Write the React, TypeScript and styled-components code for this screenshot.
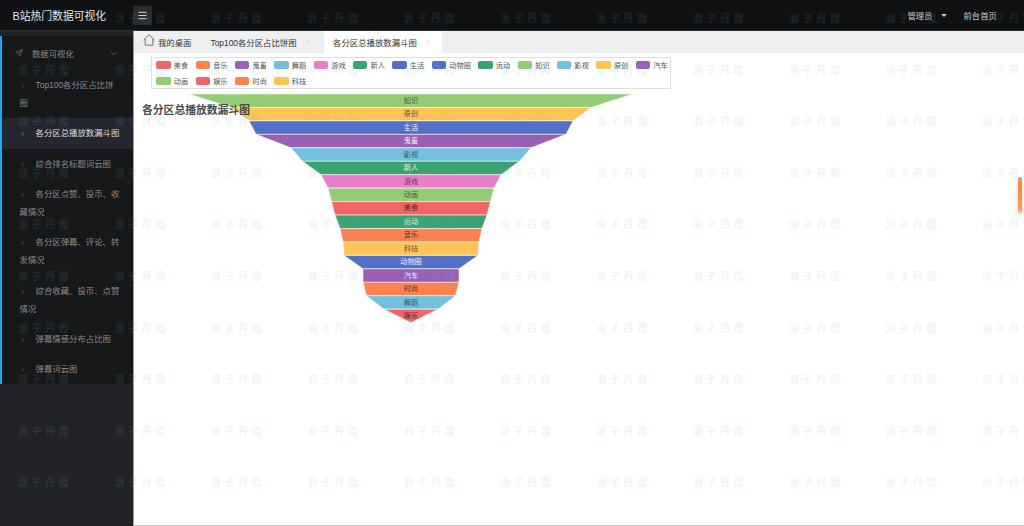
import React from 'react';
import styled, { createGlobalStyle } from 'styled-components';
import { X, ChevronRight, ChevronDown, Send, Menu } from 'lucide-react';

const GlobalStyle = createGlobalStyle`
  html, body {
    margin: 0;
    height: 100%;
    background: #fff;
    overflow: hidden;
  }
  * {
    box-sizing: border-box;
  }
  #root {
    height: 100%;
  }
`;

const FONT = `"Liberation Sans", "Noto Sans CJK SC", sans-serif`;

const Page = styled.div`
  position: relative;
  display: flex;
  flex-direction: column;
  width: 1024px;
  height: 526px;
  overflow: hidden;
  font-family: ${FONT};
  font-size: 8.4px;
`;

const Header = styled.header`
  display: flex;
  align-items: center;
  flex: 0 0 31px;
  background: #101112;
  border-bottom: 1px solid #2c2d2e;
`;

const Logo = styled.div`
  width: 133px;
  padding-left: 12.5px;
  color: #e6e6e6;
  font-size: 10.8px;
`;

const MenuButton = styled.div`
  display: flex;
  align-items: center;
  justify-content: center;
  width: 19px;
  height: 19px;
  border-radius: 2px;
  background: #2b2c2d;
  color: #e0e0e0;
`;

const HeaderRight = styled.div`
  display: flex;
  align-items: center;
  margin-left: auto;
  padding-right: 27px;
  color: #c8c8c8;
`;

const Caret = styled.span`
  width: 0;
  height: 0;
  margin: 1px 17px 0 8px;
  border-left: 3px solid transparent;
  border-right: 3px solid transparent;
  border-top: 3px solid #c8c8c8;
`;

const Body = styled.div`
  display: flex;
  flex: 1;
  min-height: 0;
`;

const Sidebar = styled.aside`
  flex: 0 0 133px;
  padding-top: 5px;
  background: #212326;
`;

const Nav = styled.nav`
  height: 348px;
  border-left: 2.4px solid #1eaaf1;
  background: #171819;
  color: #8a8a8a;
`;

const NavGroup = styled.div`
  display: flex;
  align-items: center;
  height: 34px;
  padding: 0 15px 0 13px;
  svg:first-child {
    margin-right: 9px;
  }
  svg:last-child {
    margin-left: auto;
  }
`;

const NavItem = styled.div<{ $active?: boolean }>`
  padding: 6.15px 12px 6.15px 17.6px;
  line-height: 18px;
  color: ${(p) => (p.$active ? '#dcdcdc' : '#8a8a8a')};
  background: ${(p) => (p.$active ? '#24272f' : 'transparent')};
  svg {
    margin-right: 10px;
    vertical-align: -1px;
  }
`;

const Main = styled.main`
  display: flex;
  flex-direction: column;
  flex: 1;
  min-width: 0;
  border-left: 1px solid #9a9a9a;
  border-bottom: 1px solid #c4c4c4;
`;

const TabBar = styled.div`
  display: flex;
  flex: 0 0 21.5px;
  background: #eeeff1;
`;

const Tab = styled.div<{ $active?: boolean }>`
  display: flex;
  align-items: center;
  padding: 0 11px 0 9px;
  color: #333;
  background: ${(p) => (p.$active ? '#fff' : 'transparent')};
  &:first-child {
    padding-right: 10px;
  }
  &:nth-child(2) {
    padding-right: 13.5px;
  }
`;

const HomeIcon = styled.svg`
  margin: -3px 3px 0 0;
  color: #555;
`;

const CloseIcon = styled(X)`
  margin-left: 7px;
  color: #b9b9b9;
`;

const Content = styled.div`
  position: relative;
  flex: 1;
  min-height: 0;
  padding: 4.5px 0 0 17px;
  background: #fff;
`;

const Legend = styled.div`
  display: flex;
  flex-wrap: wrap;
  align-content: flex-start;
  gap: 6.8px 7.4px;
  width: 520px;
  height: 31.5px;
  padding: 2.9px 0 0 4.2px;
  border: 1px solid #dedede;
  color: #555;
  font-size: 7.2px;
  line-height: 9px;
`;

const LegendItem = styled.div`
  display: flex;
  align-items: center;
`;

const Swatch = styled.span<{ $color: string }>`
  width: 14.4px;
  height: 8px;
  margin-right: 3.2px;
  border-radius: 2px;
  background: ${(p) => p.$color};
`;

const ChartTitle = styled.h2`
  position: absolute;
  left: 8px;
  top: 50px;
  margin: 0;
  color: #4a4a4a;
  font-size: 10.8px;
  font-weight: 700;
  line-height: 14px;
`;

const FunnelSvg = styled.svg`
  display: block;
  margin: 5.5px 0 0 -17px;
`;

const ScrollThumb = styled.div`
  position: absolute;
  right: 2px;
  top: 124px;
  width: 4px;
  height: 37px;
  border-radius: 2px;
  background: linear-gradient(#a8a8a8 0 4px, #fb8734 4px, #fd9a55 85%, #fcc9a4);
  box-shadow: 0 2px 5px rgba(0, 0, 0, 0.18);
`;

const Watermark = styled.div`
  position: absolute;
  inset: 0;
  display: grid;
  grid-template-columns: repeat(11, 96.4px);
  grid-auto-rows: 51.6px;
  padding: 11px 0 0 18px;
  overflow: hidden;
  pointer-events: none;
`;

const Mark = styled.span`
  color: rgba(110, 175, 205, 0.14);
  font-family: "Noto Sans CJK SC", sans-serif;
  font-size: 10px;
  font-weight: 700;
  letter-spacing: 3.6px;
  line-height: 14px;
  white-space: nowrap;
`;

const C = {
  green: '#93cc74',
  yellow: '#fcc555',
  blue: '#5170c6',
  purple: '#9a60b4',
  sky: '#73c0de',
  teal: '#3ba272',
  pink: '#ea7ccc',
  red: '#f06666',
  orange: '#ff8150',
};

const legend: [string, string][] = [
  ['美食', C.red], ['音乐', C.orange], ['鬼畜', C.purple], ['舞蹈', C.sky], ['游戏', C.pink],
  ['新人', C.teal], ['生活', C.blue], ['动物圈', C.blue], ['运动', C.teal], ['知识', C.green],
  ['影视', C.sky], ['原创', C.yellow], ['汽车', C.purple], ['动画', C.green], ['娱乐', C.red],
  ['时尚', C.orange], ['科技', C.yellow],
];

// name, colour, half width at the top edge, label colour
const slices: [string, string, number, string][] = [
  ['知识', C.green, 222, '#4a5a3c'],
  ['原创', C.yellow, 180, '#6b5a2c'],
  ['生活', C.blue, 162, '#eef'],
  ['鬼畜', C.purple, 155, '#eee'],
  ['影视', C.sky, 120, '#3e5d6c'],
  ['新人', C.teal, 108.5, '#e8f2ec'],
  ['游戏', C.pink, 90, '#5c3a55'],
  ['动画', C.green, 83, '#4a5a3c'],
  ['美食', C.red, 79.5, '#5a2a2a'],
  ['运动', C.teal, 76, '#d8ece2'],
  ['音乐', C.orange, 71, '#5c3522'],
  ['科技', C.yellow, 68, '#6b5a2c'],
  ['动物圈', C.blue, 67, '#eef'],
  ['汽车', C.purple, 48, '#eee'],
  ['时尚', C.orange, 48, '#5c3522'],
  ['舞蹈', C.sky, 44.5, '#3e5d6c'],
  ['娱乐', C.red, 27, '#5a2a2a'],
];

const CX = 277;
const STEP = 13.45;

function Funnel() {
  return (
    <FunnelSvg width="560" height="232">
      {slices.map(([name, color, half, label], i) => {
        const y0 = i * STEP;
        const y1 = y0 + STEP;
        const next = i < slices.length - 1 ? slices[i + 1][2] : 0;
        return (
          <g key={name}>
            <polygon
              points={`${CX - half},${y0} ${CX + half},${y0} ${CX + next},${y1} ${CX - next},${y1}`}
              fill={color}
              stroke="#fff"
              strokeOpacity="0.7"
              strokeWidth="0.8"
            />
            <text x={CX} y={y0 + 8.8} textAnchor="middle" fontSize="7.2" fill={label}>
              {name}
            </text>
          </g>
        );
      })}
    </FunnelSvg>
  );
}

const navItems = [
  'Top100各分区占比饼图',
  '各分区总播放数漏斗图',
  '综合排名标题词云图',
  '各分区点赞、投币、收藏情况',
  '各分区弹幕、评论、转发情况',
  '综合收藏、投币、点赞情况',
  '弹幕情感分布占比图',
  '弹幕词云图',
];

export default function App() {
  return (
    <Page>
      <GlobalStyle />
      <Header>
        <Logo>B站热门数据可视化</Logo>
        <MenuButton>
          <Menu size={11} strokeWidth={2} />
        </MenuButton>
        <HeaderRight>
          管理员
          <Caret />
          前台首页
        </HeaderRight>
      </Header>
      <Body>
        <Sidebar>
          <Nav>
            <NavGroup>
              <Send size={8} strokeWidth={1.5} />
              数据可视化
              <ChevronDown size={9} strokeWidth={1.5} />
            </NavGroup>
            {navItems.map((item, i) => (
              <NavItem key={item} $active={i === 1}>
                <ChevronRight size={6} strokeWidth={1.5} />
                {item}
              </NavItem>
            ))}
          </Nav>
        </Sidebar>
        <Main>
          <TabBar>
            <Tab>
              <HomeIcon width="12" height="12" viewBox="0 0 12 12" fill="none" stroke="currentColor" strokeWidth="0.8">
                <path d="M0.4 6.2 6 0.8l5.6 5.4M2.2 5v6.2h7.6V5" />
              </HomeIcon>
              我的桌面
            </Tab>
            <Tab>
              Top100各分区占比饼图
              <CloseIcon size={7} strokeWidth={1.2} />
            </Tab>
            <Tab $active>
              各分区总播放数漏斗图
              <CloseIcon size={7} strokeWidth={1.2} />
            </Tab>
          </TabBar>
          <Content>
            <Legend>
              {legend.map(([name, color]) => (
                <LegendItem key={name}>
                  <Swatch $color={color} />
                  {name}
                </LegendItem>
              ))}
            </Legend>
            <Funnel />
            <ChartTitle>各分区总播放数漏斗图</ChartTitle>
            <ScrollThumb />
          </Content>
        </Main>
      </Body>
      <Watermark>
        {Array.from({ length: 110 }, (_, i) => (
          <Mark key={i}>浪子丹霞</Mark>
        ))}
      </Watermark>
    </Page>
  );
}
